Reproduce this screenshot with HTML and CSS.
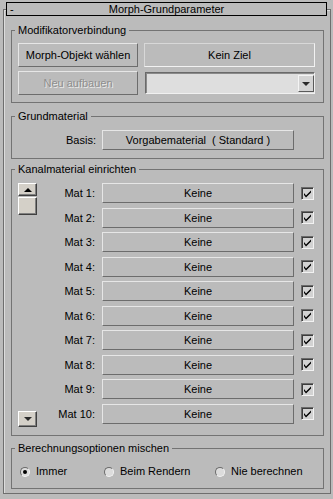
FILE: index.html
```html
<!DOCTYPE html>
<html lang="de">
<head>
    <meta charset="UTF-8">
    <title>Morph-Grundparameter</title>
    <link rel="stylesheet" href="styles.css">
</head>
<body>

<div class="rollout">
    <div class="rollout-title">
        <span class="toggle">-</span>
        <span class="rollout-name">Morph-Grundparameter</span>
    </div>

    <!-- Modifikatorverbindung -->
    <section class="group group-link">
        <div class="group-title">Modifikatorverbindung</div>
        <div class="link-grid">
            <button class="btn">Morph-Objekt wählen</button>
            <button class="btn btn-flat">Kein Ziel</button>
            <button class="btn" disabled>Neu aufbauen</button>
            <div class="dropdown">
                <span class="dropdown-value"></span>
                <span class="dropdown-arrow"><span class="tri-down"></span></span>
            </div>
        </div>
    </section>

    <!-- Grundmaterial -->
    <section class="group group-base">
        <div class="group-title">Grundmaterial</div>
        <div class="base-row">
            <span class="row-label">Basis:</span>
            <button class="btn btn-mat">Vorgabematerial&nbsp; ( Standard )</button>
        </div>
    </section>

    <!-- Kanalmaterial einrichten -->
    <section class="group group-channels">
        <div class="group-title">Kanalmaterial einrichten</div>
        <div class="channel-area">
            <div class="spinner">
                <button class="spin-btn spin-up"><span class="tri-up"></span></button>
                <button class="spin-btn spin-thumb"></button>
                <button class="spin-btn spin-down"><span class="tri-down"></span></button>
            </div>
            <div class="channel-list" id="channel-list"></div>
        </div>
    </section>

    <!-- Berechnungsoptionen mischen -->
    <section class="group group-calc">
        <div class="group-title">Berechnungsoptionen mischen</div>
        <div class="radio-row">
            <label class="radio-item"><span class="radio checked"></span>Immer</label>
            <label class="radio-item"><span class="radio"></span>Beim Rendern</label>
            <label class="radio-item"><span class="radio"></span>Nie berechnen</label>
        </div>
    </section>
</div>

<script>
    const channelList = document.getElementById('channel-list');
    const CHECK_SVG = '<svg width="9" height="9" viewBox="0 0 9 9"><path d="M1 4 L3 6.5 L8 1.5 L8 3.5 L3 8.5 L1 6 Z" fill="#000"/></svg>';

    for (let i = 1; i <= 10; i++) {
        const label = document.createElement('span');
        label.className = 'row-label';
        label.textContent = `Mat ${i}:`;

        const button = document.createElement('button');
        button.className = 'btn btn-mat';
        button.textContent = 'Keine';

        const box = document.createElement('span');
        box.className = 'checkbox';
        box.innerHTML = CHECK_SVG;

        channelList.append(label, button, box);
    }
</script>

</body>
</html>
```

FILE: styles.css
```css
body {
    margin: 0;
    width: 333px;
    height: 499px;
    overflow: hidden;
    background-color: #bbbbbb;
    font-family: 'Liberation Sans', Arial, sans-serif;
    font-size: 11px;
    color: #000;
}

button {
    appearance: none;
    margin: 0;
    padding: 0;
    font: inherit;
    color: inherit;
    outline: none;
}

/* Rollout frame */
.rollout {
    margin: 9px 2px 0 3px;
    border: 1px solid #6e6e6e;
    box-shadow: inset 1px 1px 0 #dcdcdc;
}

.rollout-title {
    display: flex;
    align-items: center;
    height: 12px;
    margin: -8px 3px 0 2px;
    border: 1px solid #000;
    background-color: #bbbbbb;
    line-height: 12px;
    position: relative;
}

.toggle {
    width: 8px;
    padding-left: 3px;
}

.rollout-name {
    flex: 1;
    text-align: center;
    padding-right: 11px;
}

/* Group boxes */
.group {
    margin: 0 6px 0 7px;
    border: 1px solid #737373;
    padding: 0 8px 0 6px;
}

.group-title {
    display: table;
    margin: -7px 0 0 -3px;
    padding: 0 3px;
    line-height: 13px;
    background-color: #bbbbbb;
}

.group-link {
    margin-top: 14px;
    padding-bottom: 7px;
}

.group-link .group-title {
    margin-bottom: 6px;
}

.group-base {
    margin-top: 13px;
    padding-bottom: 8px;
}

.group-base .group-title {
    margin-bottom: 7px;
}

.group-channels {
    margin-top: 10px;
    padding-bottom: 11.5px;
}

.group-channels .group-title {
    margin-bottom: 7px;
}

.group-calc {
    margin-top: 12px;
    margin-bottom: 4px;
    padding-bottom: 10px;
}

.group-calc .group-title {
    margin-bottom: 10px;
}

/* Buttons */
.btn {
    display: block;
    background-color: #bbbbbb;
    border: 1px solid;
    border-color: #e6e6e6 #6c6c6c #6c6c6c #e6e6e6;
    text-align: center;
    white-space: nowrap;
}

.btn-flat {
    border-color: #d8d8d8 #f2f2f2 #f2f2f2 #d8d8d8;
}

.btn:disabled {
    color: #8e8e8e;
    text-shadow: 1px 1px 0 #ececec;
}

.link-grid {
    display: grid;
    grid-template-columns: 120px 171px;
    grid-auto-rows: 24px;
    column-gap: 6px;
    row-gap: 4px;
}

.dropdown {
    align-self: center;
    display: flex;
    height: 22px;
    margin-left: 1px;
    box-sizing: border-box;
    border: 1px solid;
    border-color: #6a6a6a #f0f0f0 #f0f0f0 #6a6a6a;
    box-shadow: inset 1px 1px 0 #8a8a8a;
    background-color: #dedede;
}

.dropdown-value {
    flex: 1;
}

.dropdown-arrow {
    width: 14px;
    margin: 2px 0 1px;
    display: flex;
    align-items: center;
    justify-content: center;
    background-color: #d4d4d4;
    border: 1px solid;
    border-color: #f4f4f4 #5a5a5a #5a5a5a #f4f4f4;
}

.tri-down,
.tri-up {
    width: 0;
    height: 0;
    border-left: 4px solid transparent;
    border-right: 4px solid transparent;
}

.tri-down {
    border-top: 4px solid #2a2a2a;
}

.tri-up {
    border-bottom: 4px solid #000;
}

/* Base material row */
.row-label {
    text-align: right;
    white-space: nowrap;
    line-height: 20px;
}

.base-row {
    display: grid;
    grid-template-columns: 78px 192px;
    grid-auto-rows: 20px;
    column-gap: 6px;
}

/* Channel list */
.channel-area {
    display: flex;
}

.spinner {
    width: 19px;
    display: flex;
    flex-direction: column;
    margin-bottom: -3.5px;
}

.spin-btn {
    box-sizing: border-box;
    display: flex;
    align-items: center;
    justify-content: center;
    background-color: #d4d0c8;
    border: 1px solid;
    border-color: #ffffff #404040 #404040 #ffffff;
    box-shadow: inset -1px -1px 0 #808080;
}

.spin-up {
    height: 13px;
}

.spin-thumb {
    height: 18px;
    margin-top: 1px;
}

.spin-down {
    height: 16px;
    margin-top: auto;
}

.channel-list {
    flex: 1;
    display: grid;
    grid-template-columns: 58px 192px 13px;
    grid-auto-rows: 20px;
    column-gap: 7px;
    row-gap: 4.5px;
    align-items: center;
}

.channel-list .btn {
    height: 20px;
}

.checkbox {
    box-sizing: border-box;
    width: 13px;
    height: 13px;
    display: flex;
    align-items: center;
    justify-content: center;
    background-color: #d2d2d2;
    border: 1px solid;
    border-color: #6a6a6a #f2f2f2 #f2f2f2 #6a6a6a;
    box-shadow: inset 1px 1px 0 #3c3c3c;
}

/* Radio options */
.radio-row {
    display: grid;
    grid-template-columns: 84px 111px auto;
    padding-left: 2px;
    line-height: 13px;
}

.radio-item {
    display: flex;
    align-items: center;
    gap: 6px;
}

.radio {
    box-sizing: border-box;
    width: 10px;
    height: 10px;
    border-radius: 50%;
    border: 1px solid;
    border-color: #6a6a6a #f2f2f2 #f2f2f2 #6a6a6a;
    background-color: #dcdcdc;
    display: flex;
    align-items: center;
    justify-content: center;
}

.radio.checked::after {
    content: '';
    width: 4px;
    height: 4px;
    border-radius: 50%;
    background-color: #000;
}
```
